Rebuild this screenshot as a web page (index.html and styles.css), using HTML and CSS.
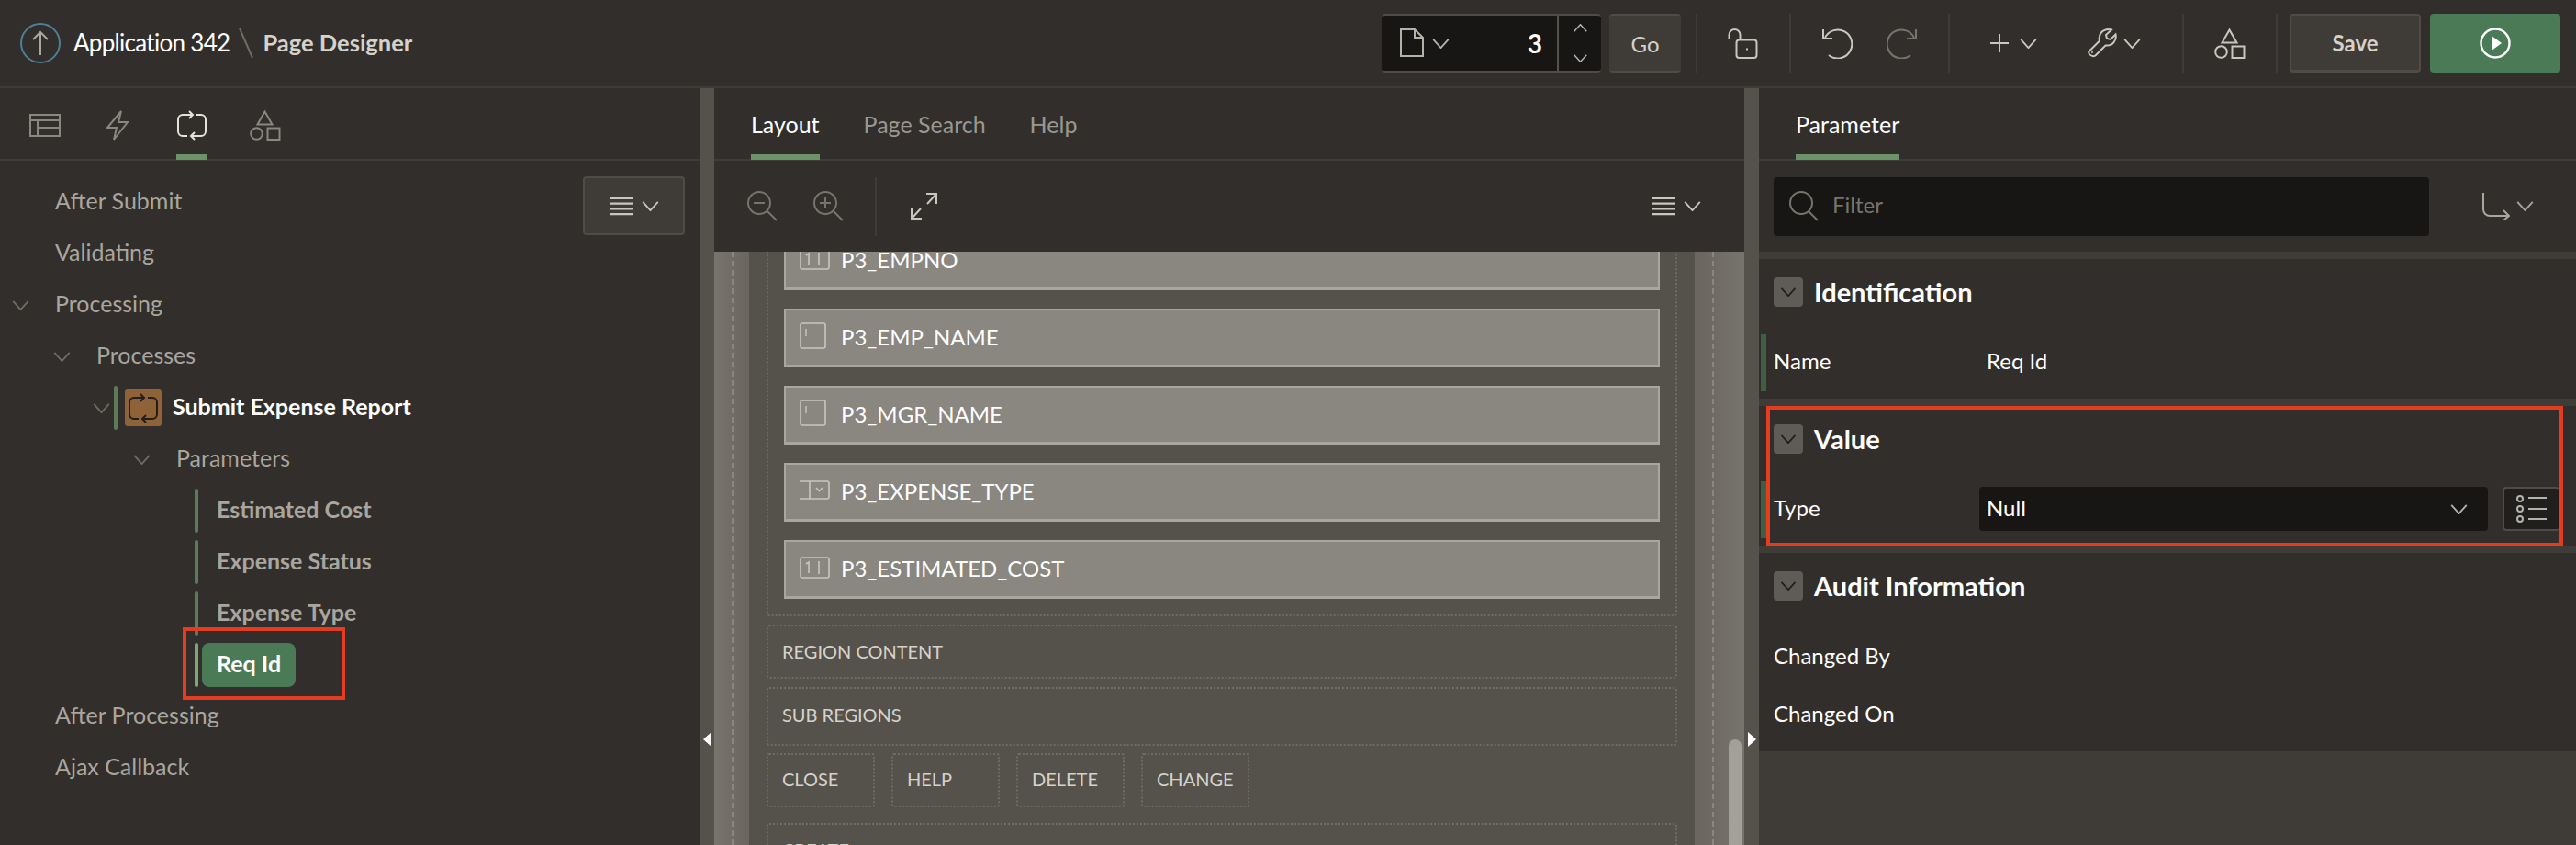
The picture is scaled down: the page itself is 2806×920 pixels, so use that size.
FILE: index.html
```html
<!DOCTYPE html>
<html>
<head>
<meta charset="utf-8">
<title>Page Designer</title>
<link rel="stylesheet" href="styles.css">
</head>
<body>
<svg class="sprite" width="0" height="0">
  <symbol id="chev" viewBox="0 0 20 12"><path d="M1 1l9 10 9-10" fill="none" stroke="currentColor" stroke-width="2"/></symbol>
  <symbol id="menu" viewBox="0 0 26 21"><path d="M0 1.5h26M0 7.5h26M0 13.5h26M0 19.5h26" fill="none" stroke="currentColor" stroke-width="2.4"/></symbol>
  <symbol id="shapes" viewBox="0 0 34 33"><path d="M16.5 1.5l8 14h-16zM19.5 19.5h13v12.500h-13z" fill="none" stroke="currentColor" stroke-width="2"/><circle cx="7.500" cy="25.500" r="6.300" fill="none" stroke="currentColor" stroke-width="2"/></symbol>
  <symbol id="process" viewBox="0 0 34 33"><path d="M17 5H7a5 5 0 0 0-5 5v13a5 5 0 0 0 5 5h5M14 1l4 4-4 4M22 5h5a5 5 0 0 1 5 5v13a5 5 0 0 1-5 5H17M20 24l-4 4 4 4" fill="none" stroke="currentColor" stroke-width="2"/></symbol>
  <symbol id="lens" viewBox="0 0 34 33"><circle cx="14" cy="13" r="12" fill="none" stroke="currentColor" stroke-width="2"/><path d="M22 22l10 10" fill="none" stroke="currentColor" stroke-width="2"/></symbol>
  <symbol id="num" viewBox="0 0 33 24"><rect x="1" y="1" width="31" height="22" rx="2" fill="none" stroke="currentColor" stroke-width="1.6"/><path d="M7 8l3-2v12M21 5v14" fill="none" stroke="currentColor" stroke-width="1.6"/></symbol>
  <symbol id="txt" viewBox="0 0 29 29"><rect x="1" y="1" width="27" height="27" rx="2" fill="none" stroke="currentColor" stroke-width="1.6"/><path d="M7 7v8" stroke="currentColor" stroke-width="1.4"/></symbol>
  <symbol id="sel" viewBox="0 0 33 21"><path d="M0 1h30a2 2 0 0 1 2 2v15a2 2 0 0 1-2 2H0M11 1v19" fill="none" stroke="currentColor" stroke-width="1.6"/><path d="M18 8l3.500 3.500L25 8" fill="none" stroke="currentColor" stroke-width="1.6"/></symbol>
</svg>

<header class="topbar">
  <div class="crumbs">
    <span class="up-btn"><svg width="20" height="30" viewBox="0 0 20 30"><path d="M10 28V3M2 11l8-8 8 8" fill="none" stroke="#a9a69f" stroke-width="2"/></svg></span>
    <span class="app-name">Application 342</span>
    <svg class="slash" width="16" height="34" viewBox="0 0 16 34"><path d="M1 1l14 32" stroke="#6f6b65" stroke-width="2"/></svg>
    <span class="page-name">Page Designer</span>
  </div>
  <div class="tools">
    <div class="page-picker">
      <svg class="doc" width="26" height="32" viewBox="0 0 26 32"><path d="M1 1h15l9 9v20H1zM16 1v9h9" fill="none" stroke="#b5b2ac" stroke-width="2"/></svg>
      <svg class="chev-sm" width="19" height="11"><use href="#chev"/></svg>
      <span class="page-no">3</span>
      <span class="spin"><svg width="15" height="9"><use href="#chev" class="flip"/></svg><svg width="15" height="9"><use href="#chev"/></svg></span>
    </div>
    <button class="btn go">Go</button>
    <i class="sep sep-a"></i>
    <svg class="ic lock" width="33" height="33" viewBox="0 0 33 33"><path d="M1.500 12V7a6 6 0 0 1 12 0v5" fill="none" stroke="#c9c6c0" stroke-width="2"/><rect x="9.500" y="12.500" width="22" height="19.500" rx="3" fill="none" stroke="#c9c6c0" stroke-width="2"/><path d="M21 21.500v2" stroke="#c9c6c0" stroke-width="2"/></svg>
    <i class="sep sep-b"></i>
    <svg class="ic undo" width="33" height="33" viewBox="0 0 33 33"><path d="M3 10A15.500 15.500 0 1 1 7 29M1 1v10h10" fill="none" stroke="#c9c6c0" stroke-width="2"/></svg>
    <svg class="ic redo" width="33" height="33" viewBox="0 0 33 33"><path d="M30 10A15.500 15.500 0 1 0 26 29M32 1v10H22" fill="none" stroke="#77736d" stroke-width="2"/></svg>
    <i class="sep sep-c"></i>
    <svg class="ic plus" width="20" height="20" viewBox="0 0 20 20"><path d="M10 0v20M0 10h20" stroke="#c9c6c0" stroke-width="2"/></svg>
    <svg class="chev-sm after-plus" width="19" height="11"><use href="#chev"/></svg>
    <svg class="ic wrench" width="32" height="32" viewBox="0 0 32 32"><path d="M1.500 25L13 13.500C11.500 8 15 1 23 1c2 0 3 .5 3 .5L20 7l1 4 4 1 5.500-5.500c1.500 6-3 13-11 12L9 29c-3 3-9-1-7.500-4z" fill="none" stroke="#c9c6c0" stroke-width="2"/><circle cx="5" cy="26" r="1" fill="#c9c6c0"/></svg>
    <svg class="chev-sm after-wrench" width="19" height="11"><use href="#chev"/></svg>
    <i class="sep sep-d"></i>
    <svg class="ic shapes-top" width="34" height="33"><use href="#shapes"/></svg>
    <i class="sep sep-e"></i>
    <button class="btn save">Save</button>
    <button class="btn run"><svg width="34" height="34" viewBox="0 0 34 34"><circle cx="17" cy="17" r="15.500" fill="none" stroke="#fff" stroke-width="2.400"/><path d="M13 9l11 8-11 8z" fill="#fff"/></svg></button>
  </div>
</header>

<main class="designer">
  <section class="left">
    <div class="tabs left-tabs">
      <svg class="tab-ic grid-ic" width="34" height="25" viewBox="0 0 34 25"><path d="M1 1h32v23H1zM1 7h32M9 7v17M9 15h24" fill="none" stroke="currentColor" stroke-width="2"/></svg>
      <svg class="tab-ic bolt" width="26" height="33" viewBox="0 0 26 33"><path d="M17 1L2 19h10L9 32l15-19H14z" fill="none" stroke="currentColor" stroke-width="2"/></svg>
      <span class="tab-ic active-ic"><svg width="34" height="33"><use href="#process"/></svg></span>
      <svg class="tab-ic shapes-tab" width="34" height="33"><use href="#shapes"/></svg>
    </div>
    <div class="tree-wrap">
      <button class="btn menu-btn"><svg width="25" height="21"><use href="#menu"/></svg><svg width="19" height="11"><use href="#chev"/></svg></button>
      <ul class="tree">
        <li class="row l0"><span class="twisty"></span><span class="t">After Submit</span></li>
        <li class="row l0"><span class="twisty"></span><span class="t">Validating</span></li>
        <li class="row l0"><span class="twisty"><svg width="19" height="11"><use href="#chev"/></svg></span><span class="t">Processing</span></li>
        <li class="row l1"><span class="twisty"><svg width="19" height="11"><use href="#chev"/></svg></span><span class="t">Processes</span></li>
        <li class="row l2"><span class="twisty"><svg width="19" height="11"><use href="#chev"/></svg></span><i class="bar"></i><span class="proc-ic"><svg width="34" height="33"><use href="#process"/></svg></span><b class="t">Submit Expense Report</b></li>
        <li class="row l3"><span class="twisty"><svg width="19" height="11"><use href="#chev"/></svg></span><span class="t">Parameters</span></li>
        <li class="row l4"><i class="bar"></i><span class="leaf">Estimated Cost</span></li>
        <li class="row l4"><i class="bar"></i><span class="leaf">Expense Status</span></li>
        <li class="row l4"><i class="bar"></i><span class="leaf">Expense Type</span></li>
        <li class="row l4 selected"><i class="bar"></i><span class="leaf">Req Id</span></li>
        <li class="row l0"><span class="twisty"></span><span class="t">After Processing</span></li>
        <li class="row l0"><span class="twisty"></span><span class="t">Ajax Callback</span></li>
      </ul>
      <div class="mark mark-tree"></div>
    </div>
  </section>

  <div class="split"><i class="grip grip-left"></i></div>

  <section class="center">
    <div class="tabs center-tabs">
      <span class="tab on">Layout</span>
      <span class="tab">Page Search</span>
      <span class="tab">Help</span>
    </div>
    <div class="center-tools">
      <svg class="zoom-ic" width="33" height="33" viewBox="0 0 33 33"><circle cx="13" cy="13" r="12" fill="none" stroke="#77736d" stroke-width="2"/><path d="M22 22l10 10M7 13h12" fill="none" stroke="#77736d" stroke-width="2"/></svg>
      <svg class="zoom-ic" width="33" height="33" viewBox="0 0 33 33"><circle cx="13" cy="13" r="12" fill="none" stroke="#77736d" stroke-width="2"/><path d="M22 22l10 10M7 13h12M13 7v12" fill="none" stroke="#77736d" stroke-width="2"/></svg>
      <i class="tool-sep"></i>
      <svg class="expand" width="29" height="29" viewBox="0 0 29 29"><path d="M17 1h11v11M28 1L18 12M12 28H1V17M1 28l10-11" fill="none" stroke="#c9c6c0" stroke-width="2"/></svg>
      <span class="center-menu"><svg width="25" height="21"><use href="#menu"/></svg><svg width="19" height="11"><use href="#chev"/></svg></span>
    </div>
    <div class="canvas">
      <div class="band band-l"></div>
      <div class="band band-r"></div>
      <div class="page-body">
        <div class="drop items">
          <div class="item"><span class="item-slot"><svg width="33" height="24"><use href="#num"/></svg></span><span class="item-name">P3_EMPNO</span></div>
          <div class="item"><span class="item-slot"><svg width="29" height="29"><use href="#txt"/></svg></span><span class="item-name">P3_EMP_NAME</span></div>
          <div class="item"><span class="item-slot"><svg width="29" height="29"><use href="#txt"/></svg></span><span class="item-name">P3_MGR_NAME</span></div>
          <div class="item"><span class="item-slot"><svg width="33" height="21"><use href="#sel"/></svg></span><span class="item-name">P3_EXPENSE_TYPE</span></div>
          <div class="item"><span class="item-slot"><svg width="33" height="24"><use href="#num"/></svg></span><span class="item-name">P3_ESTIMATED_COST</span></div>
        </div>
        <div class="drop label-box content-box">REGION CONTENT</div>
        <div class="drop label-box sub-box">SUB REGIONS</div>
        <div class="btn-row">
          <div class="drop small">CLOSE</div>
          <div class="drop small">HELP</div>
          <div class="drop small">DELETE</div>
          <div class="drop small">CHANGE</div>
        </div>
        <div class="drop label-box create-box">CREATE</div>
      </div>
      <div class="thumb"></div>
    </div>
  </section>

  <div class="split"><i class="grip grip-right"></i></div>

  <section class="right">
    <div class="tabs right-tabs"><span class="tab on">Parameter</span></div>
    <div class="filter-bar">
      <div class="filter"><svg width="34" height="33"><use href="#lens"/></svg><span class="t">Filter</span></div>
      <svg class="goto" width="30" height="30" viewBox="0 0 30 30"><path d="M1 0v18a7 7 0 0 0 7 7h20M23 19l6 6-6 5" fill="none" stroke="#a9a69f" stroke-width="2"/></svg>
      <svg class="goto-chev" width="19" height="11"><use href="#chev"/></svg>
    </div>
    <div class="group">
      <h3><span class="collapse"><svg width="18" height="10"><use href="#chev"/></svg></span>Identification</h3>
      <div class="prop flagged"><label>Name</label><span class="val">Req Id</span></div>
    </div>
    <div class="group value-group">
      <h3><span class="collapse"><svg width="18" height="10"><use href="#chev"/></svg></span>Value</h3>
      <div class="prop flagged"><label>Type</label>
        <div class="select"><span class="t">Null</span><svg width="19" height="11"><use href="#chev"/></svg></div>
        <button class="list-btn"><svg width="34" height="30" viewBox="0 0 34 30"><g fill="none" stroke="#b5b2ac" stroke-width="2"><circle cx="4" cy="4" r="3"/><circle cx="4" cy="15" r="3"/><circle cx="4" cy="26" r="3"/><path d="M13 3h20M13 15h20M13 26h20"/></g></svg></button>
      </div>
      <div class="mark mark-value"></div>
    </div>
    <div class="group audit">
      <h3><span class="collapse"><svg width="18" height="10"><use href="#chev"/></svg></span>Audit Information</h3>
      <div class="prop"><label>Changed By</label></div>
      <div class="prop"><label>Changed On</label></div>
    </div>
  </section>
</main>
</body>
</html>
```

FILE: styles.css
```css
* {
  box-sizing: border-box;
}

html, body {
  margin: 0;
  height: 100%;
  overflow: hidden;
}

body {
  background: #312e2b;
  color: #fff;
  font-family: Lato, "Noto Sans", sans-serif;
  font-size: 26px;
}

i {
  display: block;
}

svg {
  display: block;
  flex: none;
}

.sprite {
  position: absolute;
}

.flip {
  transform: scaleY(-1);
  transform-origin: center;
}

/* lifts Lato text to where the reference sits */
.t {
  margin-bottom: 4px;
}

/* top bar */
.topbar {
  height: 96px;
  border-bottom: 2px solid #3f3c37;
  display: flex;
  align-items: center;
  justify-content: space-between;
  padding: 0 17px 0 22px;
}

.crumbs {
  display: flex;
  align-items: center;
}

.up-btn {
  width: 44px;
  height: 44px;
  border: 2px solid #4f7f95;
  border-radius: 50%;
  display: flex;
  align-items: center;
  justify-content: center;
  margin-right: 14px;
}

.app-name {
  font-size: 26px;
  letter-spacing: -0.7px;
  color: #fff;
  margin-bottom: 3px;
}

.slash {
  margin: 0 10px;
}

.page-name {
  font-size: 25.5px;
  font-weight: 700;
  color: #d5d2cc;
  margin-bottom: 3px;
}

.tools {
  display: flex;
  align-items: center;
  height: 64px;
  color: #c9c6c0;
}

.page-picker {
  width: 239px;
  height: 64px;
  background: #171614;
  border-top: 2px solid #4f4c47;
  border-bottom: 2px solid #4f4c47;
  border-radius: 4px;
  display: flex;
  align-items: center;
  padding-left: 20px;
  color: #b5b2ac;
}

.chev-sm {
  margin-left: 9px;
}

.page-no {
  margin-left: auto;
  margin-right: 16px;
  font-size: 28px;
  font-weight: 700;
  color: #fff;
}

.spin {
  width: 48px;
  height: 60px;
  border-left: 2px solid #55514b;
  display: flex;
  flex-direction: column;
  align-items: center;
  justify-content: center;
  gap: 24px;
}

.btn {
  font-family: inherit;
  font-size: 24px;
  color: #d5d2cc;
  background: #3f3c37;
  border: 0;
  border-radius: 4px;
  padding: 0;
}

.go {
  width: 78px;
  height: 64px;
  margin-left: 9px;
  border-top: 2px solid #4f4c47;
  border-bottom: 2px solid #4f4c47;
}

.sep {
  width: 2px;
  height: 64px;
  background: #3f3c37;
}

.sep-a { margin-left: 16px; }
.lock { margin-left: 33px; }
.sep-b { margin-left: 34px; }
.undo { margin-left: 34px; }
.redo { margin-left: 37px; }
.sep-c { margin-left: 34px; }
.plus { margin-left: 44px; }
.after-plus { margin-left: 12px; }
.wrench { margin-left: 55px; }
.after-wrench { margin-left: 7px; }
.sep-d { margin-left: 45px; }
.shapes-top { margin-left: 33px; }
.sep-e { margin-left: 33px; }

.save {
  width: 143px;
  height: 64px;
  margin-left: 13px;
  font-weight: 700;
  border: 2px solid #4f4c47;
  border-bottom-width: 3px;
}

.run {
  width: 142px;
  height: 64px;
  margin-left: 10px;
  background: #4b7a56;
  display: flex;
  align-items: center;
  justify-content: center;
}

/* three panes */
.designer {
  height: 824px;
  display: grid;
  grid-template-columns: 762px 16px 1122px 16px 890px;
}

.split {
  background: #55514b;
  position: relative;
}

.grip {
  position: absolute;
  top: 701px;
  width: 0;
  height: 0;
  border-top: 8px solid transparent;
  border-bottom: 8px solid transparent;
}

.grip-left {
  left: 4px;
  border-right: 9px solid #fff;
}

.grip-right {
  left: 4px;
  border-left: 9px solid #fff;
}

.tabs {
  height: 79px;
  border-bottom: 2px solid #3f3c37;
  display: flex;
}

.tab {
  height: 78px;
  line-height: 79px;
  color: #9a9790;
  font-size: 25px;
}

.tab.on {
  color: #fff;
  border-bottom: 6px solid #6c9267;
}

/* left pane */
.left-tabs {
  position: relative;
  color: #8a8680;
}

.tab-ic {
  position: absolute;
  top: 24px;
}

.left-tabs .grid-ic { left: 32px; top: 28px; }
.left-tabs .bolt { left: 115px; }
.left-tabs .shapes-tab { left: 272px; }

.active-ic {
  left: 192px;
  width: 33px;
  height: 54px;
  color: #e4e1db;
  border-bottom: 6px solid #6c9267;
}

.tree-wrap {
  position: relative;
  padding-top: 17px;
}

.menu-btn {
  position: absolute;
  top: 17px;
  left: 635px;
  width: 111px;
  height: 64px;
  border: 2px solid #4f4c47;
  display: flex;
  align-items: center;
  justify-content: center;
  gap: 10px;
  color: #c9c6c0;
}

.tree {
  list-style: none;
  margin: 0;
  padding: 0;
  color: #a9a69f;
}

.row {
  height: 56px;
  display: flex;
  align-items: center;
  font-size: 25px;
}

.twisty {
  width: 47px;
  color: #6f6b65;
}

.l0 { padding-left: 13px; }
.l1 { padding-left: 58px; }
.l2 { padding-left: 101px; }
.l3 { padding-left: 145px; }
.l4 { padding-left: 212px; }

.l2 .twisty {
  width: 23px;
}

.bar {
  width: 4px;
  height: 48px;
  background: #5d7a5b;
  border-radius: 2px;
}

.proc-ic {
  width: 40px;
  height: 40px;
  margin: 0 12px 0 8px;
  background: #8f6238;
  border-radius: 3px;
  color: #211e1c;
  display: flex;
  align-items: center;
  justify-content: center;
}

.row b {
  color: #fff;
  font-weight: 700;
}

.leaf {
  height: 48px;
  line-height: 45px;
  padding: 0 16px;
  margin-left: 4px;
  border-radius: 8px;
  font-weight: 700;
}

.selected .leaf {
  background: #4b7a56;
  color: #fff;
}

.selected .bar {
  background: #7ea678;
}

.mark {
  position: absolute;
  border: 4px solid #e53b1e;
}

.mark-tree {
  left: 199px;
  top: 508px;
  width: 177px;
  height: 79px;
}

/* center pane */
.center {
  display: flex;
  flex-direction: column;
  min-height: 0;
}

.center-tabs {
  padding-left: 40px;
  gap: 48px;
}

.center-tools {
  height: 99px;
  display: flex;
  align-items: center;
  padding-left: 36px;
  flex: none;
}

.zoom-ic {
  margin-right: 39px;
}

.tool-sep {
  width: 2px;
  height: 64px;
  background: #3f3c37;
  margin-left: -5px;
}

.expand {
  margin-left: 37px;
}

.center-menu {
  margin-left: auto;
  margin-right: 47px;
  display: flex;
  align-items: center;
  gap: 9px;
  color: #c9c6c0;
}

.canvas {
  flex: 1;
  min-height: 0;
  position: relative;
  overflow: hidden;
  background: #55514b;
}

.band {
  position: absolute;
  top: 0;
  bottom: 0;
  background: #6f6b65;
}

.band-l {
  left: 0;
  width: 38px;
  background: linear-gradient(90deg, #77736d, #6a665f);
}

.band-l::after,
.band-r::after {
  content: "";
  position: absolute;
  top: 0;
  bottom: 0;
  left: 19px;
  border-left: 2px dashed #8a8680;
}

.band-r {
  left: 1068px;
  width: 54px;
  background: linear-gradient(90deg, #6a665f, #77736d);
}

.page-body {
  margin: -44px 73px 0 57px;
  position: relative;
}

.drop {
  border: 2px dotted #6f6b65;
  border-radius: 3px;
}

.items {
  padding: 20px 17px 17px;
  display: flex;
  flex-direction: column;
  gap: 20px;
  margin-bottom: 9px;
}

.item {
  height: 64px;
  background: #8a8680;
  border: 2px solid #a9a69f;
  border-bottom-width: 3px;
  display: flex;
  align-items: center;
  font-size: 24px;
  color: #fff;
  padding-left: 15px;
}

.item-slot {
  width: 45px;
  margin-bottom: 4px;
  color: #c9c6c0;
}

.item-name {
  line-height: 1;
  margin-bottom: 2px;
}

.label-box {
  font-size: 20px;
  color: #d5d2cc;
  display: flex;
  align-items: center;
  padding: 0 0 2px 15px;
}

.content-box {
  height: 59px;
  margin-bottom: 9px;
}

.sub-box {
  height: 64px;
  margin-bottom: 8px;
  padding-bottom: 5px;
}

.btn-row {
  display: flex;
  gap: 18px;
  margin-bottom: 17px;
}

.small {
  width: 118px;
  height: 59px;
  font-size: 20px;
  color: #d5d2cc;
  display: flex;
  align-items: center;
  padding: 0 0 3px 15px;
}

.create-box {
  height: 60px;
}

.thumb {
  position: absolute;
  left: 1105px;
  top: 531px;
  width: 14px;
  height: 300px;
  background: #a3a09a;
  border-radius: 7px 7px 0 0;
}

/* right pane */
.right {
  background: #3f3c37;
}

.right-tabs {
  background: #312e2b;
  padding-left: 40px;
}

.filter-bar {
  height: 99px;
  background: #312e2b;
  display: flex;
  align-items: center;
  padding-left: 16px;
  position: relative;
}

.filter {
  width: 714px;
  height: 64px;
  background: #171614;
  border-radius: 4px;
  display: flex;
  align-items: center;
  gap: 14px;
  padding-left: 16px;
  color: #77736d;
  font-size: 24px;
}

.goto {
  margin-left: 58px;
}

.goto-chev {
  margin-left: 7px;
  color: #a9a69f;
}

.group {
  position: relative;
  background: #312e2b;
  margin-top: 8px;
  padding-bottom: 8px;
  height: 152px;
}

.group h3 {
  margin: 0;
  height: 82px;
  padding: 20px 0 0 16px;
  display: flex;
  align-items: flex-start;
  font-size: 29px;
  font-weight: 700;
  line-height: 32px;
}

.collapse {
  width: 32px;
  height: 32px;
  margin-right: 12px;
  background: #5f5b56;
  border-radius: 4px;
  color: #211e1c;
  display: flex;
  align-items: center;
  justify-content: center;
}

.prop {
  height: 62px;
  display: flex;
  align-items: center;
  padding: 0 0 2px 16px;
  font-size: 24px;
  position: relative;
}

.prop label {
  width: 224px;
  margin-bottom: 3px;
}

.flagged::before {
  content: "";
  position: absolute;
  left: 2px;
  top: 0;
  bottom: 0;
  width: 6px;
  background: #3d5f44;
}

.val {
  padding-left: 8px;
  margin-bottom: 3px;
}

.select {
  width: 554px;
  height: 48px;
  background: #171614;
  border-radius: 4px;
  display: flex;
  align-items: center;
  justify-content: space-between;
  padding: 0 22px 0 8px;
  color: #fff;
  margin-right: 16px;
}

.select svg {
  color: #b5b2ac;
}

.list-btn {
  width: 62px;
  height: 48px;
  background: #211f1d;
  border: 2px solid #4f4c47;
  border-right: 0;
  border-radius: 4px;
  display: flex;
  align-items: center;
  justify-content: center;
  padding: 0;
}

.mark-value {
  left: 8px;
  top: 0;
  width: 868px;
  height: 153px;
}

.audit {
  height: 216px;
}

.audit .prop {
  height: 63px;
}
```
